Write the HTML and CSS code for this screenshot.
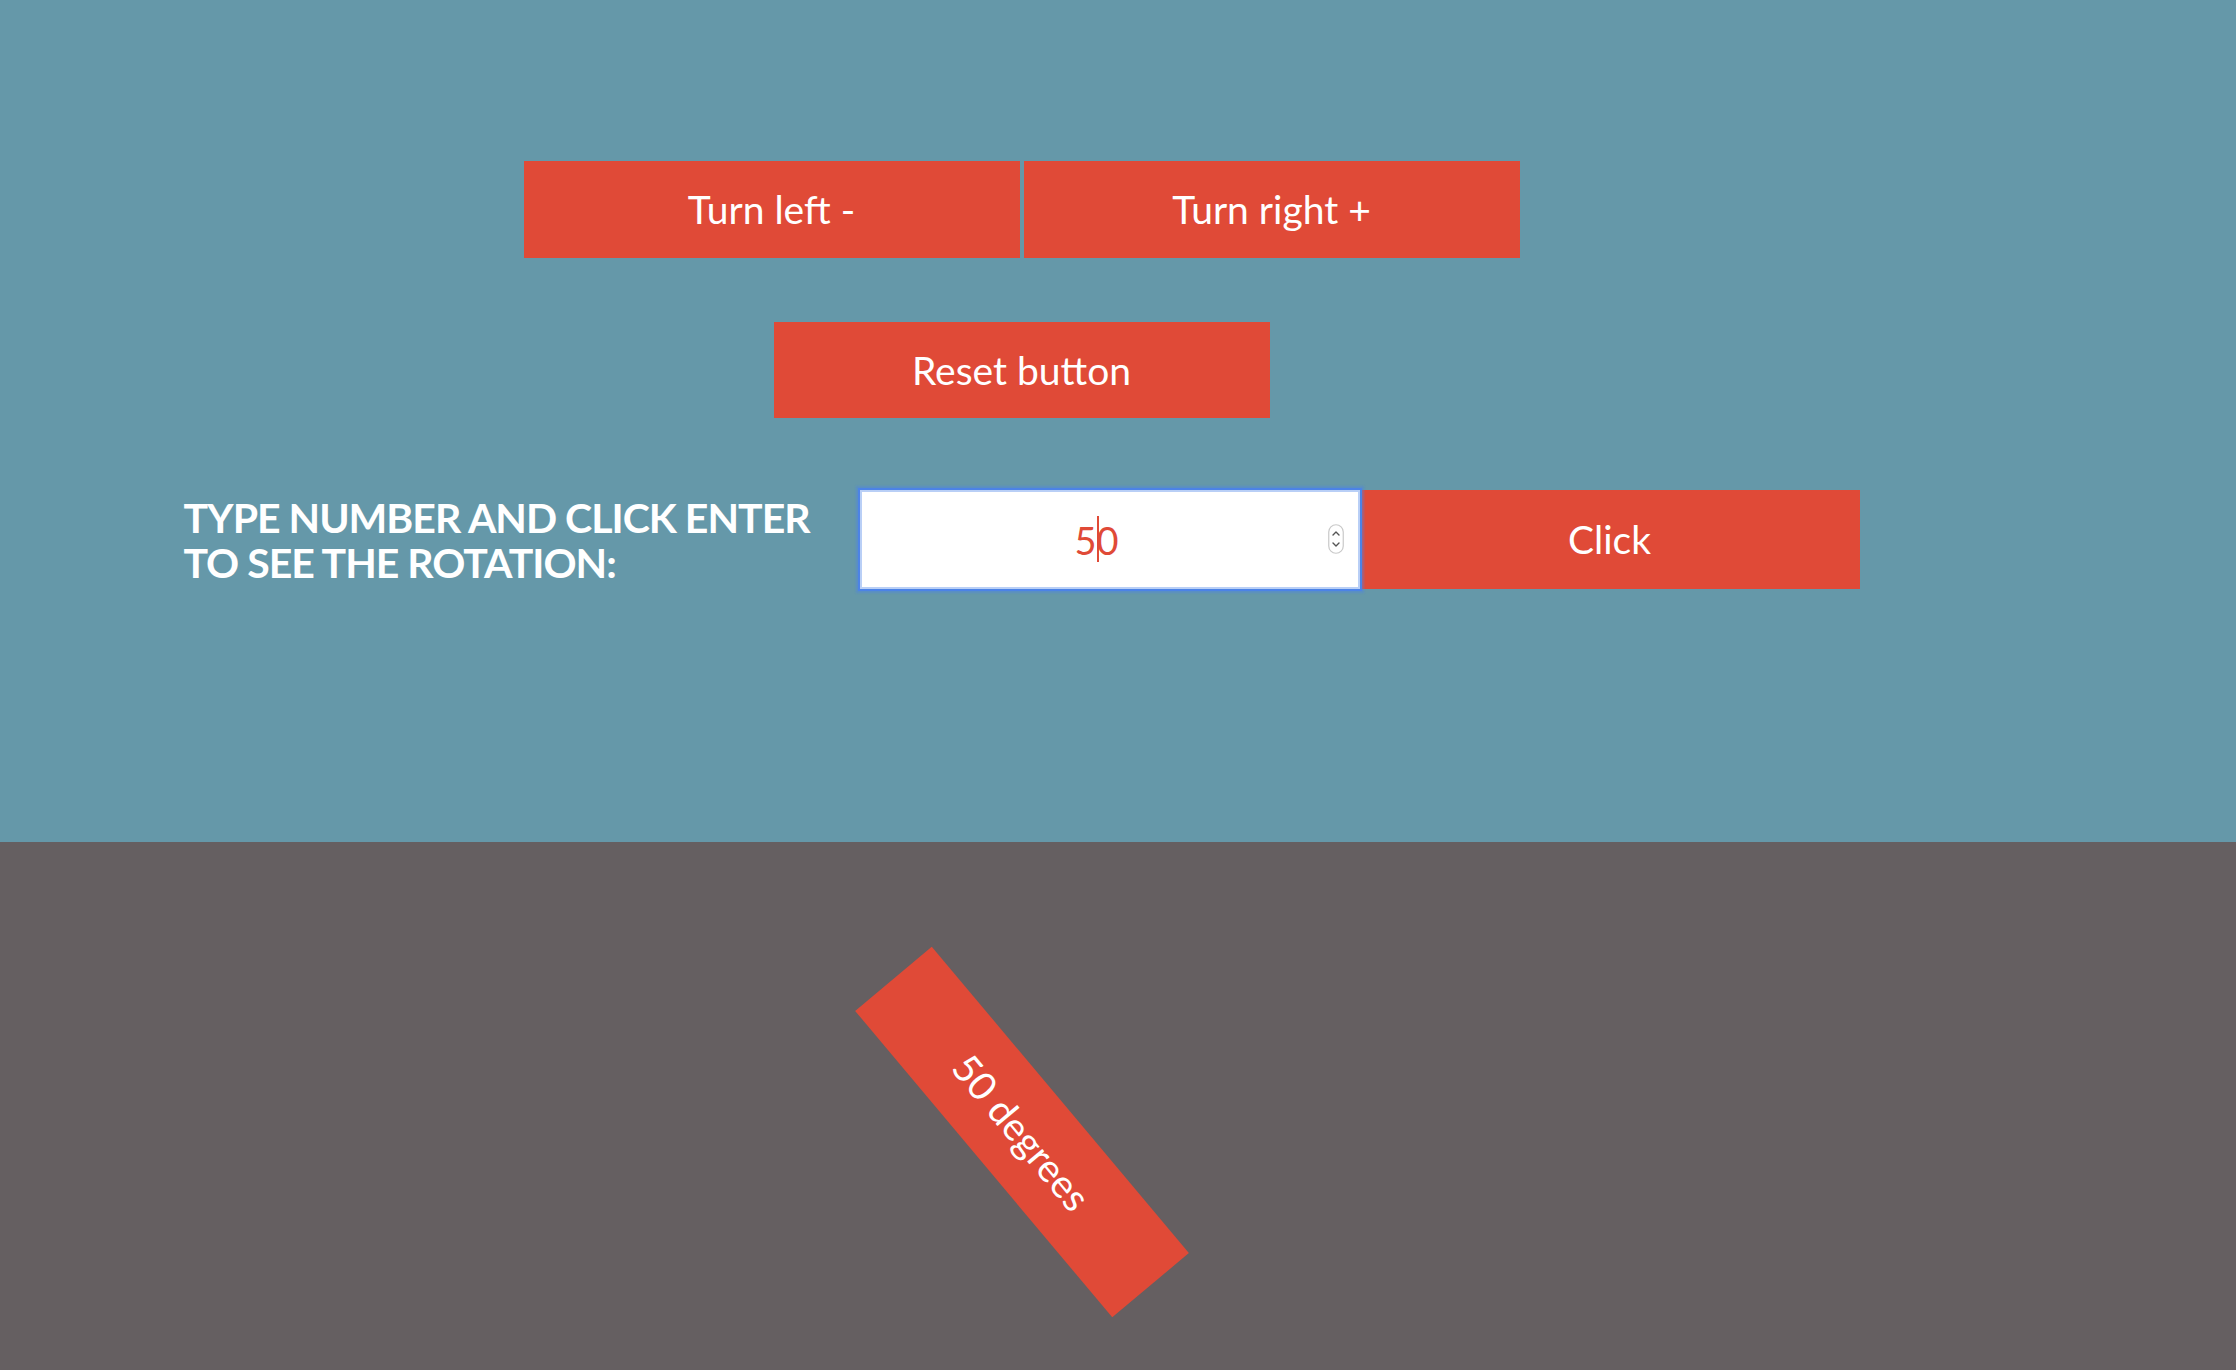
FILE: index.html
```html
<!DOCTYPE html>
<html lang="en">
<head>
<meta charset="utf-8">
<title>Rotation</title>
<link rel="stylesheet" href="styles.css">
</head>
<body>
<section class="top">
  <div class="wrap">
    <div class="row turn-row">
      <button class="btn">Turn left -</button>
      <button class="btn">Turn right +</button>
    </div>
    <div class="row reset-row">
      <button class="btn btn-reset">Reset button</button>
    </div>
    <div class="row form-row">
      <label class="label" for="deg">TYPE NUMBER AND CLICK ENTER<br>TO SEE THE ROTATION:</label>
      <div class="field">
        <input id="deg" class="input" type="text" value="50" readonly>
        <span class="caret"></span>
        <svg class="spinner" width="16" height="30" viewBox="0 0 16 30" aria-hidden="true">
          <rect x="0.75" y="0.75" width="14.5" height="28.5" rx="7.25" fill="#fff" stroke="#c9c9c9" stroke-width="1.2"/>
          <path d="M5 11 L8 8 L11 11" fill="none" stroke="#555" stroke-width="1.4" stroke-linecap="round" stroke-linejoin="round"/>
          <path d="M5 19 L8 22 L11 19" fill="none" stroke="#555" stroke-width="1.4" stroke-linecap="round" stroke-linejoin="round"/>
        </svg>
      </div>
      <button class="btn btn-click">Click</button>
    </div>
  </div>
</section>
<section class="bottom">
  <div class="wrap">
    <div class="stage">
      <div class="box">50 degrees</div>
    </div>
  </div>
</section>
</body>
</html>
```
FILE: styles.css
```css
html, body {
  margin: 0;
  padding: 0;
}
body {
  font-family: Lato, "Liberation Sans", sans-serif;
  background: #655f61;
  min-height: 1370px;
}
.wrap {
  width: 2043px;
}
.top {
  background: #6598a9;
  height: 842px;
  box-sizing: border-box;
  padding-top: 161px;
}
.row {
  display: flex;
  justify-content: center;
  align-items: center;
}
.turn-row {
  gap: 4px;
}
.reset-row {
  margin-top: 64px;
}
.form-row {
  margin-top: 72px;
}
.btn {
  width: 496px;
  height: 97px;
  border: 0;
  margin: 0;
  padding: 0;
  background: #e04a37;
  color: #fff;
  font-family: Lato, "Liberation Sans", sans-serif;
  font-size: 39px;
  font-weight: 400;
  line-height: 1;
  cursor: pointer;
}
.btn-reset {
  height: 96px;
}
.label {
  width: 676px;
  box-sizing: border-box;
  padding-left: 0;
  color: #fff;
  font-weight: 700;
  font-size: 41px;
  line-height: 45px;
  letter-spacing: -1px;
}
.field {
  position: relative;
  width: 500px;
  height: 99px;
}
.input {
  width: 100%;
  height: 100%;
  box-sizing: border-box;
  margin: 0;
  border: 2px solid #b9cff6;
  outline: none;
  box-shadow: 0 0 0 2px #4c83e6, 0 0 2px 4px rgba(76, 131, 230, 0.45);
  background: #fff;
  color: #e04a37;
  font-family: Lato, "Liberation Sans", sans-serif;
  font-size: 38px;
  text-align: center;
  padding: 0 26px 0 0;
}
.caret {
  position: absolute;
  left: 237px;
  top: 26px;
  width: 2px;
  height: 46px;
  background: #e04a37;
}
.spinner {
  position: absolute;
  right: 16px;
  top: 34px;
}
.btn-click {
  width: 500px;
  height: 99px;
}
.bottom {
  height: 528px;
  background: #655f61;
}
.stage {
  display: flex;
  justify-content: center;
  padding-top: 240px;
}
.box {
  width: 400px;
  height: 100px;
  background: #e04a37;
  color: #fff;
  font-size: 39px;
  display: flex;
  align-items: center;
  justify-content: center;
  transform: rotate(50deg);
}
```
